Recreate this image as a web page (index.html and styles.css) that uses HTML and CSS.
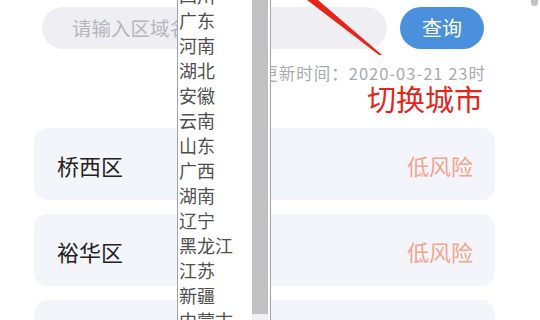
FILE: index.html
```html
<!DOCTYPE html>
<html lang="zh-CN">
<head>
<meta charset="utf-8">
<link rel="stylesheet" href="styles.css">
</head>
<body>
<div class="page">
  <div class="search">
    <div class="input">请输入区域名称</div>
    <div class="btn">查询</div>
  </div>
  <div class="update">更新时间：2020-03-21 23时</div>
  <div class="note">切换城市</div>
  <div class="cards">
    <div class="card"><span class="name">桥西区</span><span class="risk">低风险</span></div>
    <div class="card"><span class="name">裕华区</span><span class="risk">低风险</span></div>
    <div class="card"><span class="name">长安区</span><span class="risk">低风险</span></div>
  </div>

  <div class="dropdown">
    <div class="items">
      <div class="item">四川</div>
      <div class="item">广东</div>
      <div class="item">河南</div>
      <div class="item">湖北</div>
      <div class="item">安徽</div>
      <div class="item">云南</div>
      <div class="item">山东</div>
      <div class="item">广西</div>
      <div class="item">湖南</div>
      <div class="item">辽宁</div>
      <div class="item">黑龙江</div>
      <div class="item">江苏</div>
      <div class="item">新疆</div>
      <div class="item">内蒙古</div>
    </div>
    <div class="scrollbar"><div class="thumb"></div></div>
  </div>

  <svg class="arrow" width="540" height="60" viewBox="0 0 540 60">
    <polygon points="307,0 318,0 382,55 379,55" fill="#e8231a"/>
  </svg>
  <div class="page-thumb"></div>
</div>
</body>
</html>
```

FILE: styles.css
```css
html, body {
  margin: 0;
  padding: 0;
  background: #ffffff;
}
.page {
  position: relative;
  width: 540px;
  height: 320px;
  overflow: hidden;
  font-family: "Noto Sans CJK SC", "Liberation Sans", sans-serif;
}
.search {
  display: flex;
  gap: 13px;
  padding: 7px 0 0 42px;
}
.input {
  width: 345px;
  height: 42px;
  box-sizing: border-box;
  border-radius: 21px;
  background: #efeff3;
  color: #b5b5bb;
  font-size: 19.5px;
  line-height: 42px;
  padding-left: 30px;
  white-space: nowrap;
  overflow: hidden;
}
.btn {
  width: 84px;
  height: 42px;
  border-radius: 21px;
  background: #4a90dc;
  color: #ffffff;
  font-size: 20px;
  line-height: 42px;
  text-align: center;
}
.update {
  margin-top: 14px;
  height: 20px;
  line-height: 20px;
  text-align: right;
  padding-right: 54px;
  font-size: 16.5px;
  letter-spacing: 1px;
  color: #a9a9ae;
  white-space: nowrap;
}
.note {
  height: 30px;
  line-height: 30px;
  text-align: right;
  padding-right: 57px;
  font-size: 29px;
  color: #e8231a;
}
.cards {
  margin: 15px 0 0 34px;
  width: 461px;
  display: flex;
  flex-direction: column;
  gap: 14px;
}
.card {
  height: 72px;
  border-radius: 14px;
  background: #f4f4fb;
  display: flex;
  align-items: center;
  justify-content: space-between;
  padding: 2px 22px 0 23px;
  box-sizing: border-box;
  font-size: 22px;
}
.name {
  color: #222222;
}
.risk {
  color: #f2a58d;
}
.dropdown {
  position: absolute;
  left: 177px;
  top: -18px;
  width: 92px;
  height: 360px;
  border: 1px solid #9aa3bd;
  background: #ffffff;
  display: flex;
}
.items {
  width: 74px;
  padding-left: 1px;
  box-sizing: border-box;
}
.item {
  height: 25px;
  line-height: 25px;
  font-size: 18px;
  color: #4f4f4f;
  white-space: nowrap;
  overflow: hidden;
}
.scrollbar {
  width: 16px;
  background: #f0f0f0;
}
.thumb {
  height: 331px;
  background: #c1c1c1;
}
.arrow {
  position: absolute;
  left: 0;
  top: 0;
}
.page-thumb {
  position: absolute;
  right: 2px;
  top: -4px;
  width: 7px;
  height: 10px;
  border-radius: 3px;
  background: #c4c4c4;
}
```
